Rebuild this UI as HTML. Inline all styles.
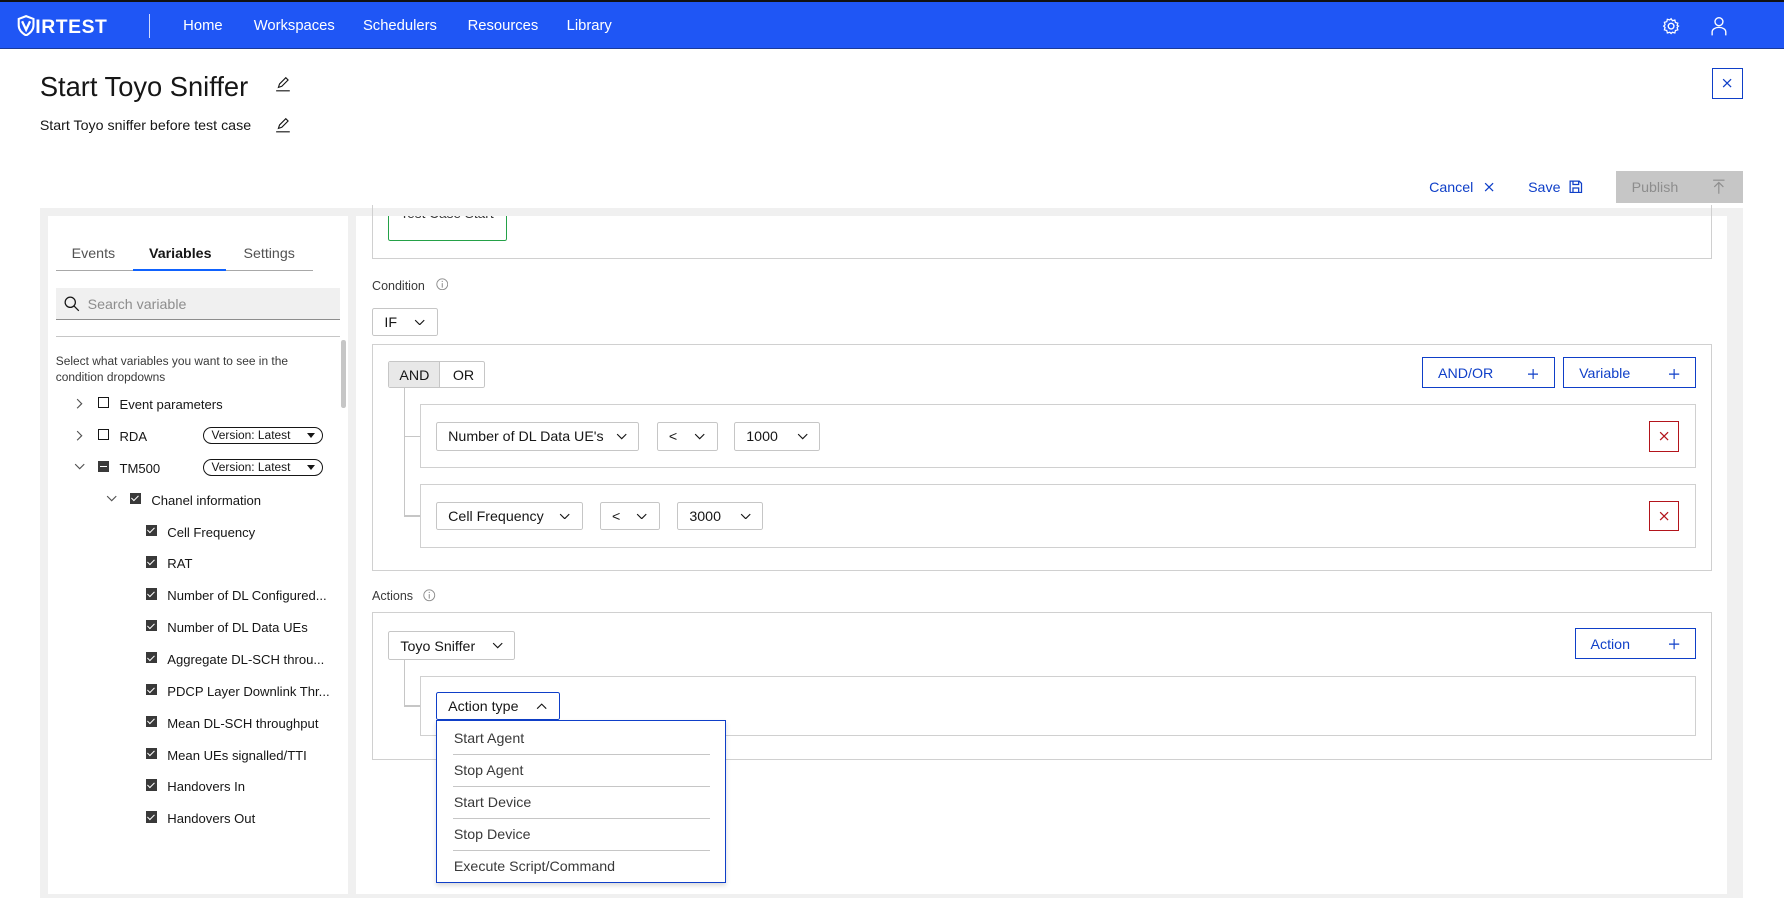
<!DOCTYPE html>
<html><head><meta charset="utf-8"><style>
html,body{margin:0;padding:0;background:#fff;overflow:hidden}
body{zoom:1.1378;width:1568px;height:789px;position:relative;font-family:"Liberation Sans",sans-serif;color:#161616}
.a{position:absolute}
.nav{left:0;top:0;width:1568px;height:43px;background:#1f56f5;border-top:2px solid #111;box-sizing:border-box;border-bottom:1px solid #1a3a9a}
.nv{color:#fff;font-size:13px;top:16px}
.dd{position:absolute;border:1px solid #c6c6c6;border-radius:2px;box-sizing:border-box;font-size:12.5px;display:flex;align-items:center;padding-left:10px;padding-top:2px;background:#fff}
.dd svg{position:absolute;right:10px;top:50%;margin-top:-3px}
.box{position:absolute;border:1px solid #d0d0d0;box-sizing:border-box}
.bb{position:absolute;border:1px solid #0f3fc8;color:#0f3fc8;font-size:12.5px;box-sizing:border-box;display:flex;align-items:center;padding-left:13px;padding-top:2px;background:#fff}
.bb svg{position:absolute;right:14px;top:9px}
.xb{position:absolute;border:1px solid #b3141b;width:27px;height:27px;box-sizing:border-box}
.xb svg{position:absolute;left:8px;top:8px}
.cb{position:absolute;width:10px;height:10px;border:1px solid #161616;box-sizing:border-box}
.cbk{position:absolute;width:10px;height:10px;background:#393939}
.cbk.c:after{content:"";position:absolute;left:3px;top:1.5px;width:3px;height:5px;border:solid #fff;border-width:0 1.2px 1.2px 0;transform:rotate(45deg)}
.tx{position:absolute;font-size:11.5px;white-space:nowrap}
.pill{position:absolute;border:1px solid #161616;border-radius:8px;height:15px;width:106px;box-sizing:border-box;font-size:10.5px;line-height:13px;padding-left:7px}
.pill:after{content:"";position:absolute;right:6px;top:5px;border:4px solid transparent;border-top:5px solid #161616}
.mi{position:absolute;left:15px;font-size:12.5px;color:#393939}
.sep{position:absolute;left:14px;width:226px;height:1px;background:#c6c6c6}
.k .tx{margin-top:2px}
</style></head><body>
<div class="a nav"></div>
<div class="a" style="left:15px;top:13px;color:#fff;font-weight:bold;font-size:17px;letter-spacing:0.5px">
<svg width="16" height="19" viewBox="0 0 16 19" style="vertical-align:-3px"><path d="M8 1L1.5 3.5V9c0 4 3 7 6.5 9 3.5-2 6.5-5 6.5-9V3.5z" fill="none" stroke="#fff" stroke-width="1.8"/><path d="M4.5 5.5L8 13l3.5-7.5" fill="none" stroke="#fff" stroke-width="2"/></svg>IRTEST</div>
<div class="a" style="left:131px;top:12px;width:1px;height:21px;background:#cfd9ff"></div>
<div class="a nv" style="left:161px">Home</div>
<div class="a nv" style="left:223px">Workspaces</div>
<div class="a nv" style="left:319px">Schedulers</div>
<div class="a nv" style="left:411px">Resources</div>
<div class="a nv" style="left:498px">Library</div>
<svg class="a" style="left:1461px;top:15px" width="16" height="16" viewBox="0 0 16 16"><circle cx="8" cy="8" r="2.5" fill="none" stroke="#fff" stroke-width="1.2"/><path d="M8 1.5l1.2 1.8 2.1-.6.5 2.1 2.1.6-.6 2.1L14.5 8l-1.2 1.2.6 2.1-2.1.6-.5 2.1-2.1-.6L8 14.5l-1.2-1.1-2.1.6-.5-2.1-2.1-.6.6-2.1L1.5 8l1.2-1.2-.6-2.1 2.1-.6.5-2.1 2.1.6z" fill="none" stroke="#fff" stroke-width="1.1"/></svg>
<svg class="a" style="left:1504px;top:14px" width="14" height="18" viewBox="0 0 14 18"><circle cx="7" cy="5" r="3.5" fill="none" stroke="#fff" stroke-width="1.2"/><path d="M1 17v-3a6 4 0 0 1 12 0v3" fill="none" stroke="#fff" stroke-width="1.2"/></svg>

<div class="a" style="left:35px;top:62px;font-size:24px">Start Toyo Sniffer</div>
<svg class="a" style="left:242px;top:67px" width="14" height="14" viewBox="0 0 14 14"><path d="M3 10l1-3 5.5-5.5 2 2L6 9z M1 13h12" fill="none" stroke="#161616" stroke-width="1"/></svg>
<div class="a" style="left:35px;top:104px;font-size:12.5px">Start Toyo sniffer before test case</div>
<svg class="a" style="left:242px;top:103px" width="14" height="14" viewBox="0 0 14 14"><path d="M3 10l1-3 5.5-5.5 2 2L6 9z M1 13h12" fill="none" stroke="#161616" stroke-width="1"/></svg>
<div class="a" style="left:1505px;top:60px;width:27px;height:27px;border:1px solid #0f3fc8;box-sizing:border-box"><svg style="position:absolute;left:8px;top:8px" width="9" height="9"><path d="M1 1l7 7M8 1L1 8" stroke="#0f3fc8" stroke-width="1.1"/></svg></div>

<div class="a" style="left:1256px;top:158px;font-size:12.5px;color:#0f3fc8">Cancel</div>
<svg class="a" style="left:1304px;top:160px" width="9" height="9"><path d="M1 1l7 7M8 1L1 8" stroke="#0f3fc8" stroke-width="1.1"/></svg>
<div class="a" style="left:1343px;top:158px;font-size:12.5px;color:#0f3fc8">Save</div>
<svg class="a" style="left:1379px;top:158px" width="12" height="12" viewBox="0 0 12 12"><path d="M1 1h8l2 2v8H1z M3.5 1v3h5V1 M3.5 11V7h5v4" fill="none" stroke="#0f3fc8" stroke-width="1.1"/></svg>
<div class="a" style="left:1420px;top:150px;width:112px;height:28px;background:#c6c6c6"></div>
<div class="a" style="left:1434px;top:158px;font-size:12.5px;color:#8d8d8d">Publish</div>
<svg class="a" style="left:1505px;top:157px" width="12" height="14" viewBox="0 0 12 14"><path d="M1 1h10M6 3v10M2 7l4-4 4 4" fill="none" stroke="#8d8d8d" stroke-width="1"/></svg>

<div class="a" style="left:35px;top:183px;width:1497px;height:606px;background:#f0f0f0"></div>
<div class="a" style="left:42px;top:190px;width:264px;height:596px;background:#fff"></div>
<div class="a" style="left:313px;top:190px;width:1205px;height:596px;background:#fff"></div>

<div class="k">
<div class="tx" style="left:63px;top:214px;font-size:12.5px;color:#525252">Events</div>
<div class="tx" style="left:131px;top:214px;font-size:12.5px;font-weight:bold">Variables</div>
<div class="tx" style="left:214px;top:214px;font-size:12.5px;color:#525252">Settings</div>
</div>
<div class="a" style="left:49px;top:237px;width:226px;height:1px;background:#a8a8a8"></div>
<div class="a" style="left:117px;top:236px;width:82px;height:2px;background:#0f62fe"></div>
<div class="a" style="left:49px;top:253px;width:250px;height:28px;background:#f0f0f0;border-bottom:1px solid #8d8d8d;box-sizing:border-box"></div>
<svg class="a" style="left:56px;top:260px" width="14" height="14" viewBox="0 0 14 14"><circle cx="5.5" cy="5.5" r="4.5" fill="none" stroke="#161616" stroke-width="1.1"/><path d="M9 9l4 4" stroke="#161616" stroke-width="1.1"/></svg>
<div class="tx" style="left:77px;top:261px;font-size:12.5px;color:#8d8d8d">Search variable</div>
<div class="a" style="left:49px;top:295px;width:250px;height:1px;background:#c6c6c6"></div>
<div class="a" style="left:300px;top:299px;width:4px;height:60px;background:#c6c6c6;border-radius:2px"></div>
<div class="tx" style="left:49px;top:311px;font-size:10.5px;color:#393939;line-height:14px;white-space:normal;width:240px">Select what variables you want to see in the condition dropdowns</div>

<div class="k">
<svg class="a" style="left:67px;top:350px" width="6" height="10"><path d="M1 1l4 4-4 4" fill="none" stroke="#525252"/></svg>
<div class="cb" style="left:86px;top:349px"></div>
<div class="tx" style="left:105px;top:347px">Event parameters</div>
<svg class="a" style="left:67px;top:378px" width="6" height="10"><path d="M1 1l4 4-4 4" fill="none" stroke="#525252"/></svg>
<div class="cb" style="left:86px;top:377px"></div>
<div class="tx" style="left:105px;top:375px">RDA</div>
<div class="pill" style="left:178px;top:375px">Version: Latest</div>
<svg class="a" style="left:65px;top:407px" width="10" height="6"><path d="M1 1l4 4 4-4" fill="none" stroke="#525252"/></svg>
<div class="cbk" style="left:86px;top:405px"><div style="position:absolute;left:2px;top:4.5px;width:6px;height:1.3px;background:#fff"></div></div>
<div class="tx" style="left:105px;top:403px">TM500</div>
<div class="pill" style="left:178px;top:403px">Version: Latest</div>
<svg class="a" style="left:93px;top:435px" width="10" height="6"><path d="M1 1l4 4 4-4" fill="none" stroke="#525252"/></svg>
<div class="cbk c" style="left:114px;top:433px"></div>
<div class="tx" style="left:133px;top:431px">Chanel information</div>

<div class="cbk c" style="left:128px;top:461px"></div><div class="tx" style="left:147px;top:459px">Cell Frequency</div>
<div class="cbk c" style="left:128px;top:489px"></div><div class="tx" style="left:147px;top:487px">RAT</div>
<div class="cbk c" style="left:128px;top:517px"></div><div class="tx" style="left:147px;top:515px">Number of DL Configured...</div>
<div class="cbk c" style="left:128px;top:545px"></div><div class="tx" style="left:147px;top:543px">Number of DL Data UEs</div>
<div class="cbk c" style="left:128px;top:573px"></div><div class="tx" style="left:147px;top:571px">Aggregate DL-SCH throu...</div>
<div class="cbk c" style="left:128px;top:601px"></div><div class="tx" style="left:147px;top:599px">PDCP Layer Downlink Thr...</div>
<div class="cbk c" style="left:128px;top:629px"></div><div class="tx" style="left:147px;top:627px">Mean DL-SCH throughput</div>
<div class="cbk c" style="left:128px;top:657px"></div><div class="tx" style="left:147px;top:655px">Mean UEs signalled/TTI</div>
<div class="cbk c" style="left:128px;top:685px"></div><div class="tx" style="left:147px;top:683px">Handovers In</div>
<div class="cbk c" style="left:128px;top:713px"></div><div class="tx" style="left:147px;top:711px">Handovers Out</div>
</div>

<!-- right panel -->
<div class="box" style="left:327px;top:180px;width:1178px;height:48px;border-top:none"></div>
<div class="a" style="left:341px;top:190px;width:105px;height:22px;border:1px solid #24a148;border-top:none;box-sizing:border-box;border-radius:0 0 2px 2px;overflow:hidden"><div style="position:absolute;left:10px;top:-9px;font-size:12px;color:#393939">Test Case Start</div></div>
<div class="tx" style="left:327px;top:245px;font-size:11px;color:#393939">Condition</div>
<svg class="a" style="left:383px;top:244px" width="11" height="11"><circle cx="5.5" cy="5.5" r="4.8" fill="none" stroke="#8d8d8d" stroke-width=".8"/><path d="M5.5 4.5v4M5.5 2.5v1" stroke="#8d8d8d" stroke-width=".9"/></svg>
<div class="dd" style="left:327px;top:271px;width:58px;height:24px">IF<svg width="10" height="6"><path d="M1 1l4 4 4-4" fill="none" stroke="#161616"/></svg></div>

<div class="box" style="left:327px;top:302px;width:1178px;height:200px"></div>
<div class="a" style="left:341px;top:317px;width:85px;height:24px;border:1px solid #c6c6c6;border-radius:2px;box-sizing:border-box"></div>
<div class="a" style="left:342px;top:318px;width:44px;height:22px;background:#e8e8e8;border-right:1px solid #c6c6c6"></div>
<div class="tx" style="left:351px;top:323px;font-size:12.5px">AND</div>
<div class="tx" style="left:398px;top:323px;font-size:12.5px">OR</div>
<div class="bb" style="left:1250px;top:314px;width:117px;height:27px">AND/OR<svg width="9" height="9"><path d="M4.5 0v9M0 4.5h9" stroke="#0f3fc8"/></svg></div>
<div class="bb" style="left:1374px;top:314px;width:117px;height:27px">Variable<svg width="9" height="9"><path d="M4.5 0v9M0 4.5h9" stroke="#0f3fc8"/></svg></div>
<div class="a" style="left:355px;top:341px;width:1px;height:113px;background:#c6c6c6"></div>
<div class="a" style="left:355px;top:383px;width:14px;height:1px;background:#c6c6c6"></div>
<div class="a" style="left:355px;top:453px;width:14px;height:1px;background:#c6c6c6"></div>

<div class="box" style="left:369px;top:355px;width:1122px;height:56px"></div>
<div class="dd" style="left:383px;top:371px;width:179px;height:25px">Number of DL Data UE's<svg width="10" height="6"><path d="M1 1l4 4 4-4" fill="none" stroke="#161616"/></svg></div>
<div class="dd" style="left:577px;top:371px;width:54px;height:25px">&lt;<svg width="10" height="6"><path d="M1 1l4 4 4-4" fill="none" stroke="#161616"/></svg></div>
<div class="dd" style="left:645px;top:371px;width:76px;height:25px">1000<svg width="10" height="6"><path d="M1 1l4 4 4-4" fill="none" stroke="#161616"/></svg></div>
<div class="xb" style="left:1449px;top:370px"><svg width="9" height="9"><path d="M1 1l7 7M8 1L1 8" stroke="#b3141b" stroke-width="1.1"/></svg></div>

<div class="box" style="left:369px;top:425px;width:1122px;height:57px"></div>
<div class="dd" style="left:383px;top:441px;width:129px;height:25px">Cell Frequency<svg width="10" height="6"><path d="M1 1l4 4 4-4" fill="none" stroke="#161616"/></svg></div>
<div class="dd" style="left:527px;top:441px;width:53px;height:25px">&lt;<svg width="10" height="6"><path d="M1 1l4 4 4-4" fill="none" stroke="#161616"/></svg></div>
<div class="dd" style="left:595px;top:441px;width:76px;height:25px">3000<svg width="10" height="6"><path d="M1 1l4 4 4-4" fill="none" stroke="#161616"/></svg></div>
<div class="xb" style="left:1449px;top:440px"><svg width="9" height="9"><path d="M1 1l7 7M8 1L1 8" stroke="#b3141b" stroke-width="1.1"/></svg></div>

<div class="tx" style="left:327px;top:518px;font-size:11px;color:#393939">Actions</div>
<svg class="a" style="left:372px;top:518px" width="11" height="11"><circle cx="5.5" cy="5.5" r="4.8" fill="none" stroke="#8d8d8d" stroke-width=".8"/><path d="M5.5 4.5v4M5.5 2.5v1" stroke="#8d8d8d" stroke-width=".9"/></svg>
<div class="box" style="left:327px;top:538px;width:1178px;height:130px"></div>
<div class="dd" style="left:341px;top:555px;width:112px;height:25px">Toyo Sniffer<svg width="10" height="6"><path d="M1 1l4 4 4-4" fill="none" stroke="#161616"/></svg></div>
<div class="bb" style="left:1384px;top:552px;width:107px;height:27px">Action<svg width="9" height="9"><path d="M4.5 0v9M0 4.5h9" stroke="#0f3fc8"/></svg></div>
<div class="a" style="left:355px;top:580px;width:1px;height:40px;background:#c6c6c6"></div>
<div class="a" style="left:355px;top:620px;width:14px;height:1px;background:#c6c6c6"></div>
<div class="box" style="left:369px;top:594px;width:1122px;height:53px"></div>
<div class="dd" style="left:383px;top:608px;width:109px;height:25px;border-color:#0f3fc8">Action type<svg width="10" height="6"><path d="M1 5l4-4 4 4" fill="none" stroke="#161616"/></svg></div>
<div class="a" style="left:383px;top:633px;width:255px;height:143px;border:1px solid #0f3fc8;box-sizing:border-box;background:#fff;box-shadow:0 2px 4px rgba(0,0,0,.15)">
<div class="mi" style="top:9px">Start Agent</div><div class="sep" style="top:29px"></div>
<div class="mi" style="top:37px">Stop Agent</div><div class="sep" style="top:57px"></div>
<div class="mi" style="top:65px">Start Device</div><div class="sep" style="top:85px"></div>
<div class="mi" style="top:93px">Stop Device</div><div class="sep" style="top:113px"></div>
<div class="mi" style="top:121px">Execute Script/Command</div>
</div>
</body></html>
